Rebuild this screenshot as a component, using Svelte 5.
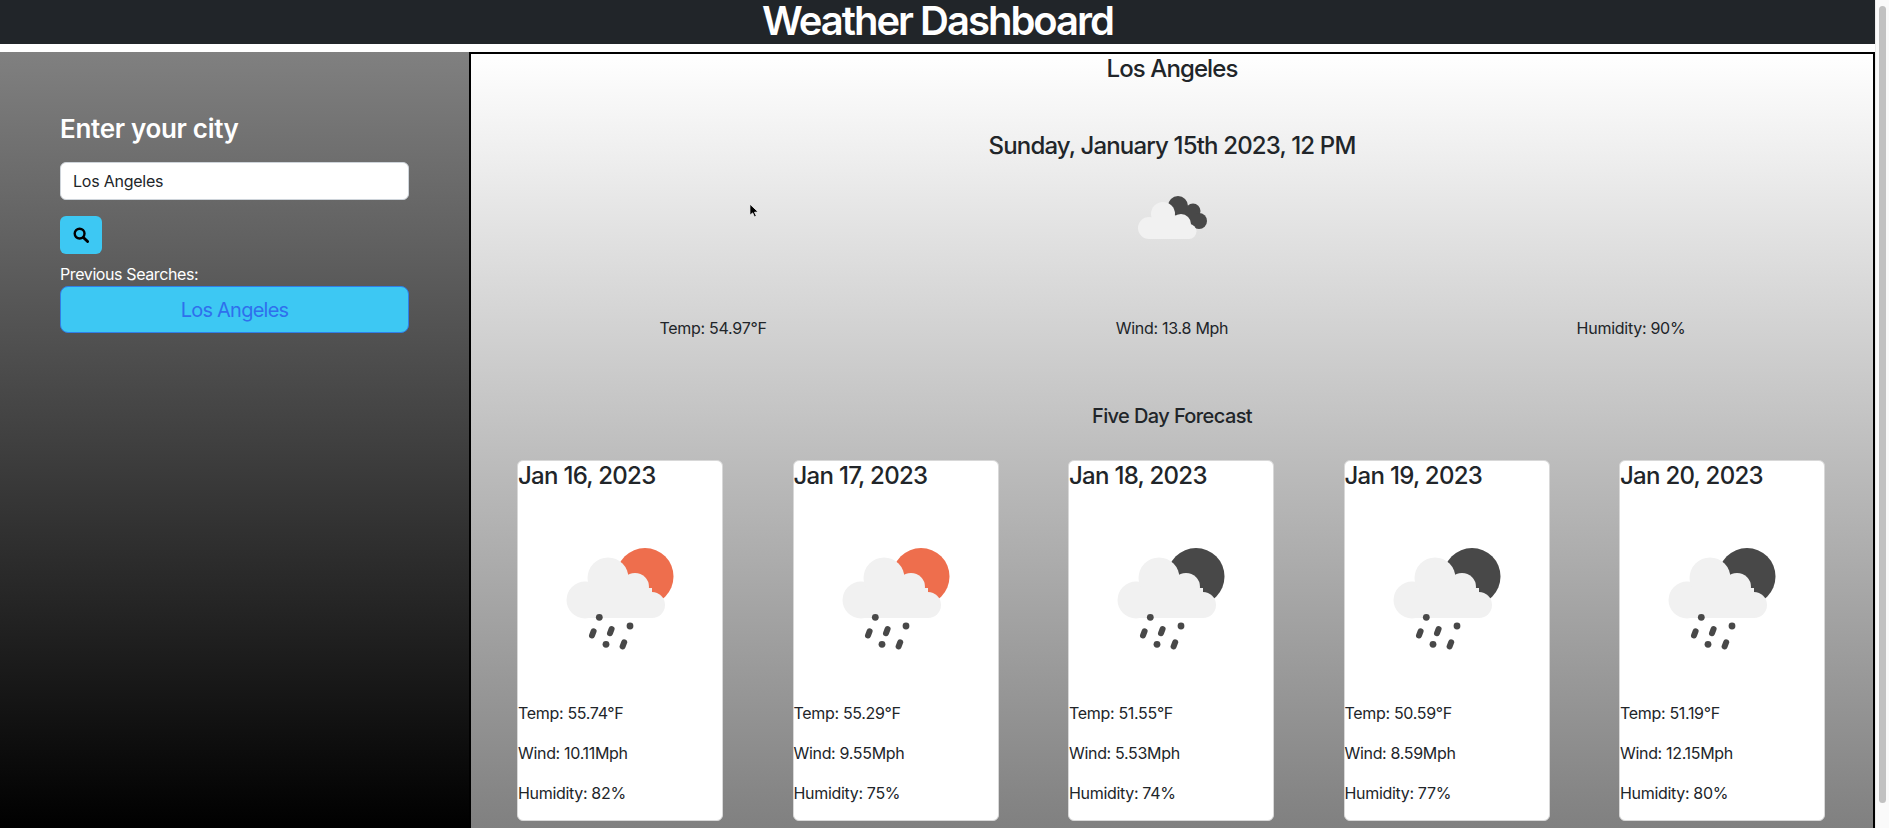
<script>
    const forecast = [
        { date: "Jan 16, 2023", temp: "55.74", wind: "10.11", humidity: 82, sun: "#ee6e4d" },
        { date: "Jan 17, 2023", temp: "55.29", wind: "9.55", humidity: 75, sun: "#ee6e4d" },
        { date: "Jan 18, 2023", temp: "51.55", wind: "5.53", humidity: 74, sun: "#484848" },
        { date: "Jan 19, 2023", temp: "50.59", wind: "8.59", humidity: 77, sun: "#484848" },
        { date: "Jan 20, 2023", temp: "51.19", wind: "12.15", humidity: 80, sun: "#484848" }
    ];
</script>

<div class="window">
    <div class="page">
        <header>Weather Dashboard</header>
        <div class="content">
            <aside>
                <h3>Enter your city</h3>
                <input type="text" value="Los Angeles" />
                <button class="search" aria-label="Search">
                    <svg viewBox="0 0 16 16" width="16" height="16">
                        <circle cx="6.6" cy="6.6" r="4.9" fill="none" stroke="#000" stroke-width="2.4" />
                        <path d="M10.4 10.4 L14.6 14.6" stroke="#000" stroke-width="2.8" stroke-linecap="round" />
                    </svg>
                </button>
                <div class="prev">Previous Searches:</div>
                <button class="history">Los Angeles</button>
            </aside>
            <main>
                <h2 class="city">Los Angeles</h2>
                <h2 class="date">Sunday, January 15th 2023, 12 PM</h2>
                <svg class="now-icon" viewBox="11 0 120 90" width="120" height="90">
                    <g fill="#484848">
                        <circle cx="77" cy="37" r="10" />
                        <circle cx="92" cy="42" r="7.5" />
                        <circle cx="98" cy="52" r="8" />
                        <rect x="76" y="38" width="18" height="20" />
                    </g>
                    <g fill="#f1f1f1">
                        <circle cx="48" cy="59" r="11" />
                        <circle cx="62" cy="45" r="12" />
                        <circle cx="80" cy="55" r="10" />
                        <circle cx="88" cy="62.5" r="7.5" />
                        <rect x="48" y="50" width="40" height="20" />
                    </g>
                </svg>
                <div class="stats">
                    <span>Temp: 54.97°F</span>
                    <span>Wind: 13.8 Mph</span>
                    <span>Humidity: 90%</span>
                </div>
                <h3 class="five">Five Day Forecast</h3>
                <div class="cards">
                    {#each forecast as day}
                        <div class="card">
                            <h4>{day.date}</h4>
                            <svg class="rain" viewBox="0 0 140 130" width="140" height="130">
                                <circle cx="95" cy="46.5" r="28.5" fill={day.sun} />
                                <g fill="#f1f1f1">
                                    <circle cx="35" cy="70" r="18.5" />
                                    <circle cx="58" cy="48" r="20.5" />
                                    <circle cx="85" cy="57" r="14" />
                                    <circle cx="102" cy="75" r="13" />
                                    <rect x="35" y="58" width="67" height="30" />
                                </g>
                                <g fill="#484848">
                                    <circle cx="49.3" cy="87.3" r="3.4" />
                                    <circle cx="80" cy="96" r="3.4" />
                                    <circle cx="56" cy="114.3" r="3.4" />
                                </g>
                                <g stroke="#484848" stroke-width="6" stroke-linecap="round">
                                    <path d="M43.6 101.3 L42 105.5" />
                                    <path d="M61.6 99 L60 103.2" />
                                    <path d="M74.2 112.3 L72.6 116.5" />
                                </g>
                            </svg>
                            <p class="first">Temp: {day.temp}°F</p>
                            <p>Wind: {day.wind}Mph</p>
                            <p>Humidity: {day.humidity}%</p>
                        </div>
                    {/each}
                </div>
                <svg class="cursor" viewBox="0 0 12 18" width="11" height="17">
                    <path d="M1 1 L1 13 L4 10.5 L6 15 L8 14 L6 9.8 L10 9.5 Z" fill="#000" stroke="#fff" stroke-width="0.8" />
                </svg>
            </main>
        </div>
    </div>
    <div class="scrollbar"><div class="thumb"></div></div>
</div>

<style>
    :global(body) {
        font-family: Inter, "Liberation Sans", sans-serif;
        color: #212529;
        background: #fff;
    }

    .window {
        display: flex;
        height: 828px;
        overflow: hidden;
    }

    .page {
        flex: 1;
        min-width: 0;
    }

    header {
        height: 44px;
        margin-bottom: 8px;
        background: #212529;
        color: #fff;
        text-align: center;
        font-size: 40px;
        font-weight: 600;
        letter-spacing: -0.05em;
        line-height: 42px;
    }

    .content {
        display: flex;
        height: 776px;
    }

    aside {
        width: 469px;
        box-sizing: border-box;
        padding: 60px 60px 0 60px;
        background: linear-gradient(#808080, #000);
        color: #fff;
    }

    aside h3 {
        margin: 0 0 16px;
        font-size: 26px;
        font-weight: 600;
        letter-spacing: -0.012em;
        line-height: 34px;
    }

    input {
        display: block;
        width: 100%;
        height: 38px;
        box-sizing: border-box;
        padding: 6px 12px;
        border: 1px solid #ced4da;
        border-radius: 6px;
        background: #fff;
        color: #212529;
        font: 16px/24px Inter, sans-serif;
        letter-spacing: -0.015em;
    }

    .search {
        display: flex;
        align-items: center;
        justify-content: center;
        width: 42px;
        height: 38px;
        margin: 16px 0 8px;
        padding: 0;
        border: 0;
        border-radius: 6px;
        background: #3dc8f3;
    }

    .prev {
        font-size: 16px;
        letter-spacing: -0.025em;
        line-height: 24px;
    }

    .history {
        display: block;
        width: 100%;
        height: 47px;
        border: 1px solid #2f7fe8;
        border-radius: 8px;
        background: #3dc8f3;
        color: #2f6fed;
        font: 20px/30px Inter, sans-serif;
        letter-spacing: -0.038em;
    }

    main {
        position: relative;
        flex: 1;
        min-width: 0;
        display: flex;
        flex-direction: column;
        align-items: center;
        border: 2px solid #000;
        border-bottom: 0;
        background: linear-gradient(#fff, #808080);
    }

    h2 {
        margin: 0;
        font-size: 24px;
        font-weight: 500;
        letter-spacing: -0.038em;
        line-height: 29px;
    }

    .date {
        margin-top: 48px;
        letter-spacing: -0.035em;
    }

    .now-icon {
        display: block;
        flex: none;
        margin-top: 9px;
        filter: blur(0.5px);
    }

    .stats {
        display: grid;
        grid-template-columns: repeat(3, 459px);
        margin-top: 57px;
        font-size: 16px;
        letter-spacing: -0.017em;
        line-height: 24px;
        text-align: center;
    }

    .five {
        margin: 64px 0 32px;
        font-size: 20px;
        font-weight: 500;
        letter-spacing: -0.03em;
        line-height: 24px;
    }

    .cards {
        display: flex;
        justify-content: space-between;
        align-self: stretch;
        padding: 0 48px 0 46px;
    }

    .card {
        width: 206px;
        height: 361px;
        box-sizing: border-box;
        border: 1px solid #d8d8d8;
        border-radius: 6px;
        background: #fff;
    }

    .card h4 {
        margin: 0;
        font-size: 24px;
        font-weight: 500;
        letter-spacing: -0.03em;
        line-height: 29px;
    }

    .rain {
        display: block;
        margin: 40px auto 0;
        filter: blur(0.7px);
    }

    .card p {
        margin: 16px 0 0;
        font-size: 16px;
        letter-spacing: -0.02em;
        line-height: 24px;
    }

    .card p.first {
        margin-top: 41px;
    }

    .cursor {
        position: absolute;
        left: 278px;
        top: 149px;
    }

    .scrollbar {
        flex: none;
        width: 14px;
        box-sizing: border-box;
        padding: 6px 3px 0;
        border-left: 1px solid #ececec;
        background: #fafafa;
    }

    .thumb {
        height: 797px;
        border-radius: 4px;
        background: #c1c1c1;
    }
</style>
